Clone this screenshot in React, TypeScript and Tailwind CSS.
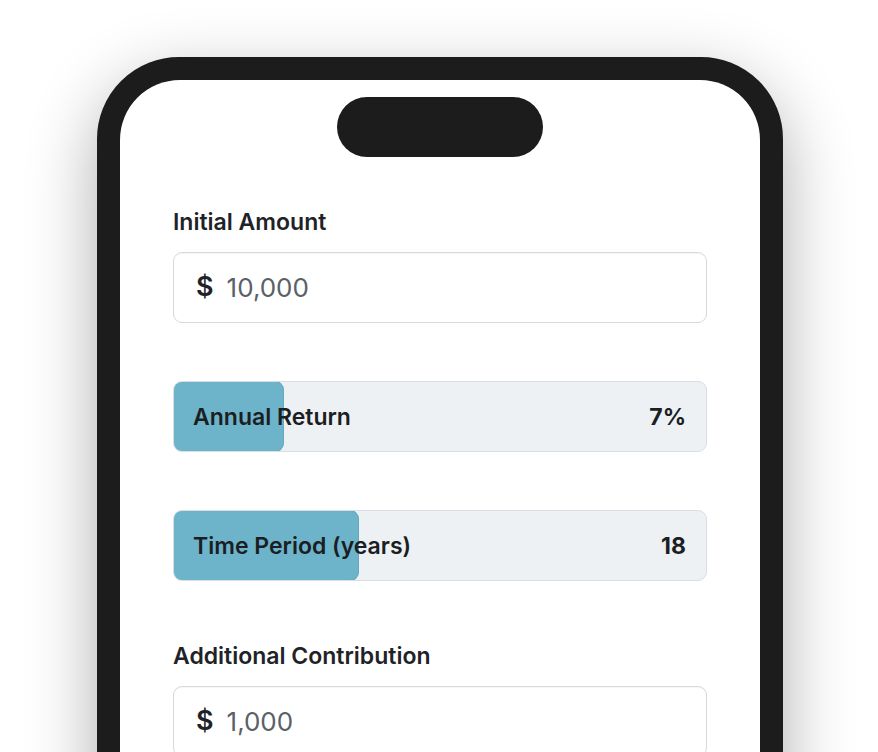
import React from 'react';

type SliderRowProps = {
  label: string;
  value: string;
  fill: number;
};

// Range-style field: tinted track with a filled portion behind the label
const SliderRow: React.FC<SliderRowProps> = ({ label, value, fill }) => (
  <div className="relative h-[71px] w-full overflow-hidden rounded-[9px] border border-[#dadee3] bg-[#edf1f4]">
    <div
      className="absolute inset-y-[-1px] left-[-1px] rounded-[9px] bg-[#6db4cb] shadow-[inset_0_0_0_1px_rgba(80,150,175,0.35)]"
      style={{ width: fill }}
    />
    <div className="relative flex h-full items-center justify-between pl-[19px] pr-[20px] pt-[2px] text-[23px] font-semibold text-[#1b1e22]">
      <span>{label}</span>
      <span className="font-bold">{value}</span>
    </div>
  </div>
);

type MoneyFieldProps = {
  label: string;
  value: string;
};

const MoneyField: React.FC<MoneyFieldProps> = ({ label, value }) => (
  <div className="flex flex-col">
    <label className="text-[23px] font-semibold leading-[24px] text-[#1f2328]">{label}</label>
    <div className="mt-[18px] flex h-[71px] items-center gap-[13px] rounded-[9px] border border-[#d6d9de] bg-white pl-[22px] shadow-[inset_0_1px_1px_rgba(0,0,0,0.04)]">
      <span className="text-[27px] font-semibold text-[#1f2328]">$</span>
      <span className="text-[26px] text-[#5b6068]">{value}</span>
    </div>
  </div>
);

export default function App() {
  return (
    <div
      className="h-[752px] w-[878px] overflow-hidden bg-white"
      style={{ fontFamily: 'Inter, "Noto Sans", sans-serif' }}
    >
      <div className="ml-[97px] mt-[57px] h-[900px] w-[686px] rounded-[82px] border-[23px] border-[#1c1c1c] bg-[#1c1c1c] shadow-[0_24px_70px_rgba(0,0,0,0.32)]">
        <div className="h-full w-full overflow-hidden rounded-[60px] bg-white">
          <div className="flex justify-center pt-[17px]">
            <div className="h-[60px] w-[206px] rounded-full bg-[#1c1c1c]" />
          </div>

          <div className="flex flex-col px-[53px] pt-[53px]">
            <MoneyField label="Initial Amount" value="10,000" />

            <div className="mt-[58px]">
              <SliderRow label="Annual Return" value="7%" fill={111} />
            </div>

            <div className="mt-[58px]">
              <SliderRow label="Time Period (years)" value="18" fill={186} />
            </div>

            <div className="mt-[63px]">
              <MoneyField label="Additional Contribution" value="1,000" />
            </div>
          </div>
        </div>
      </div>
    </div>
  );
}
